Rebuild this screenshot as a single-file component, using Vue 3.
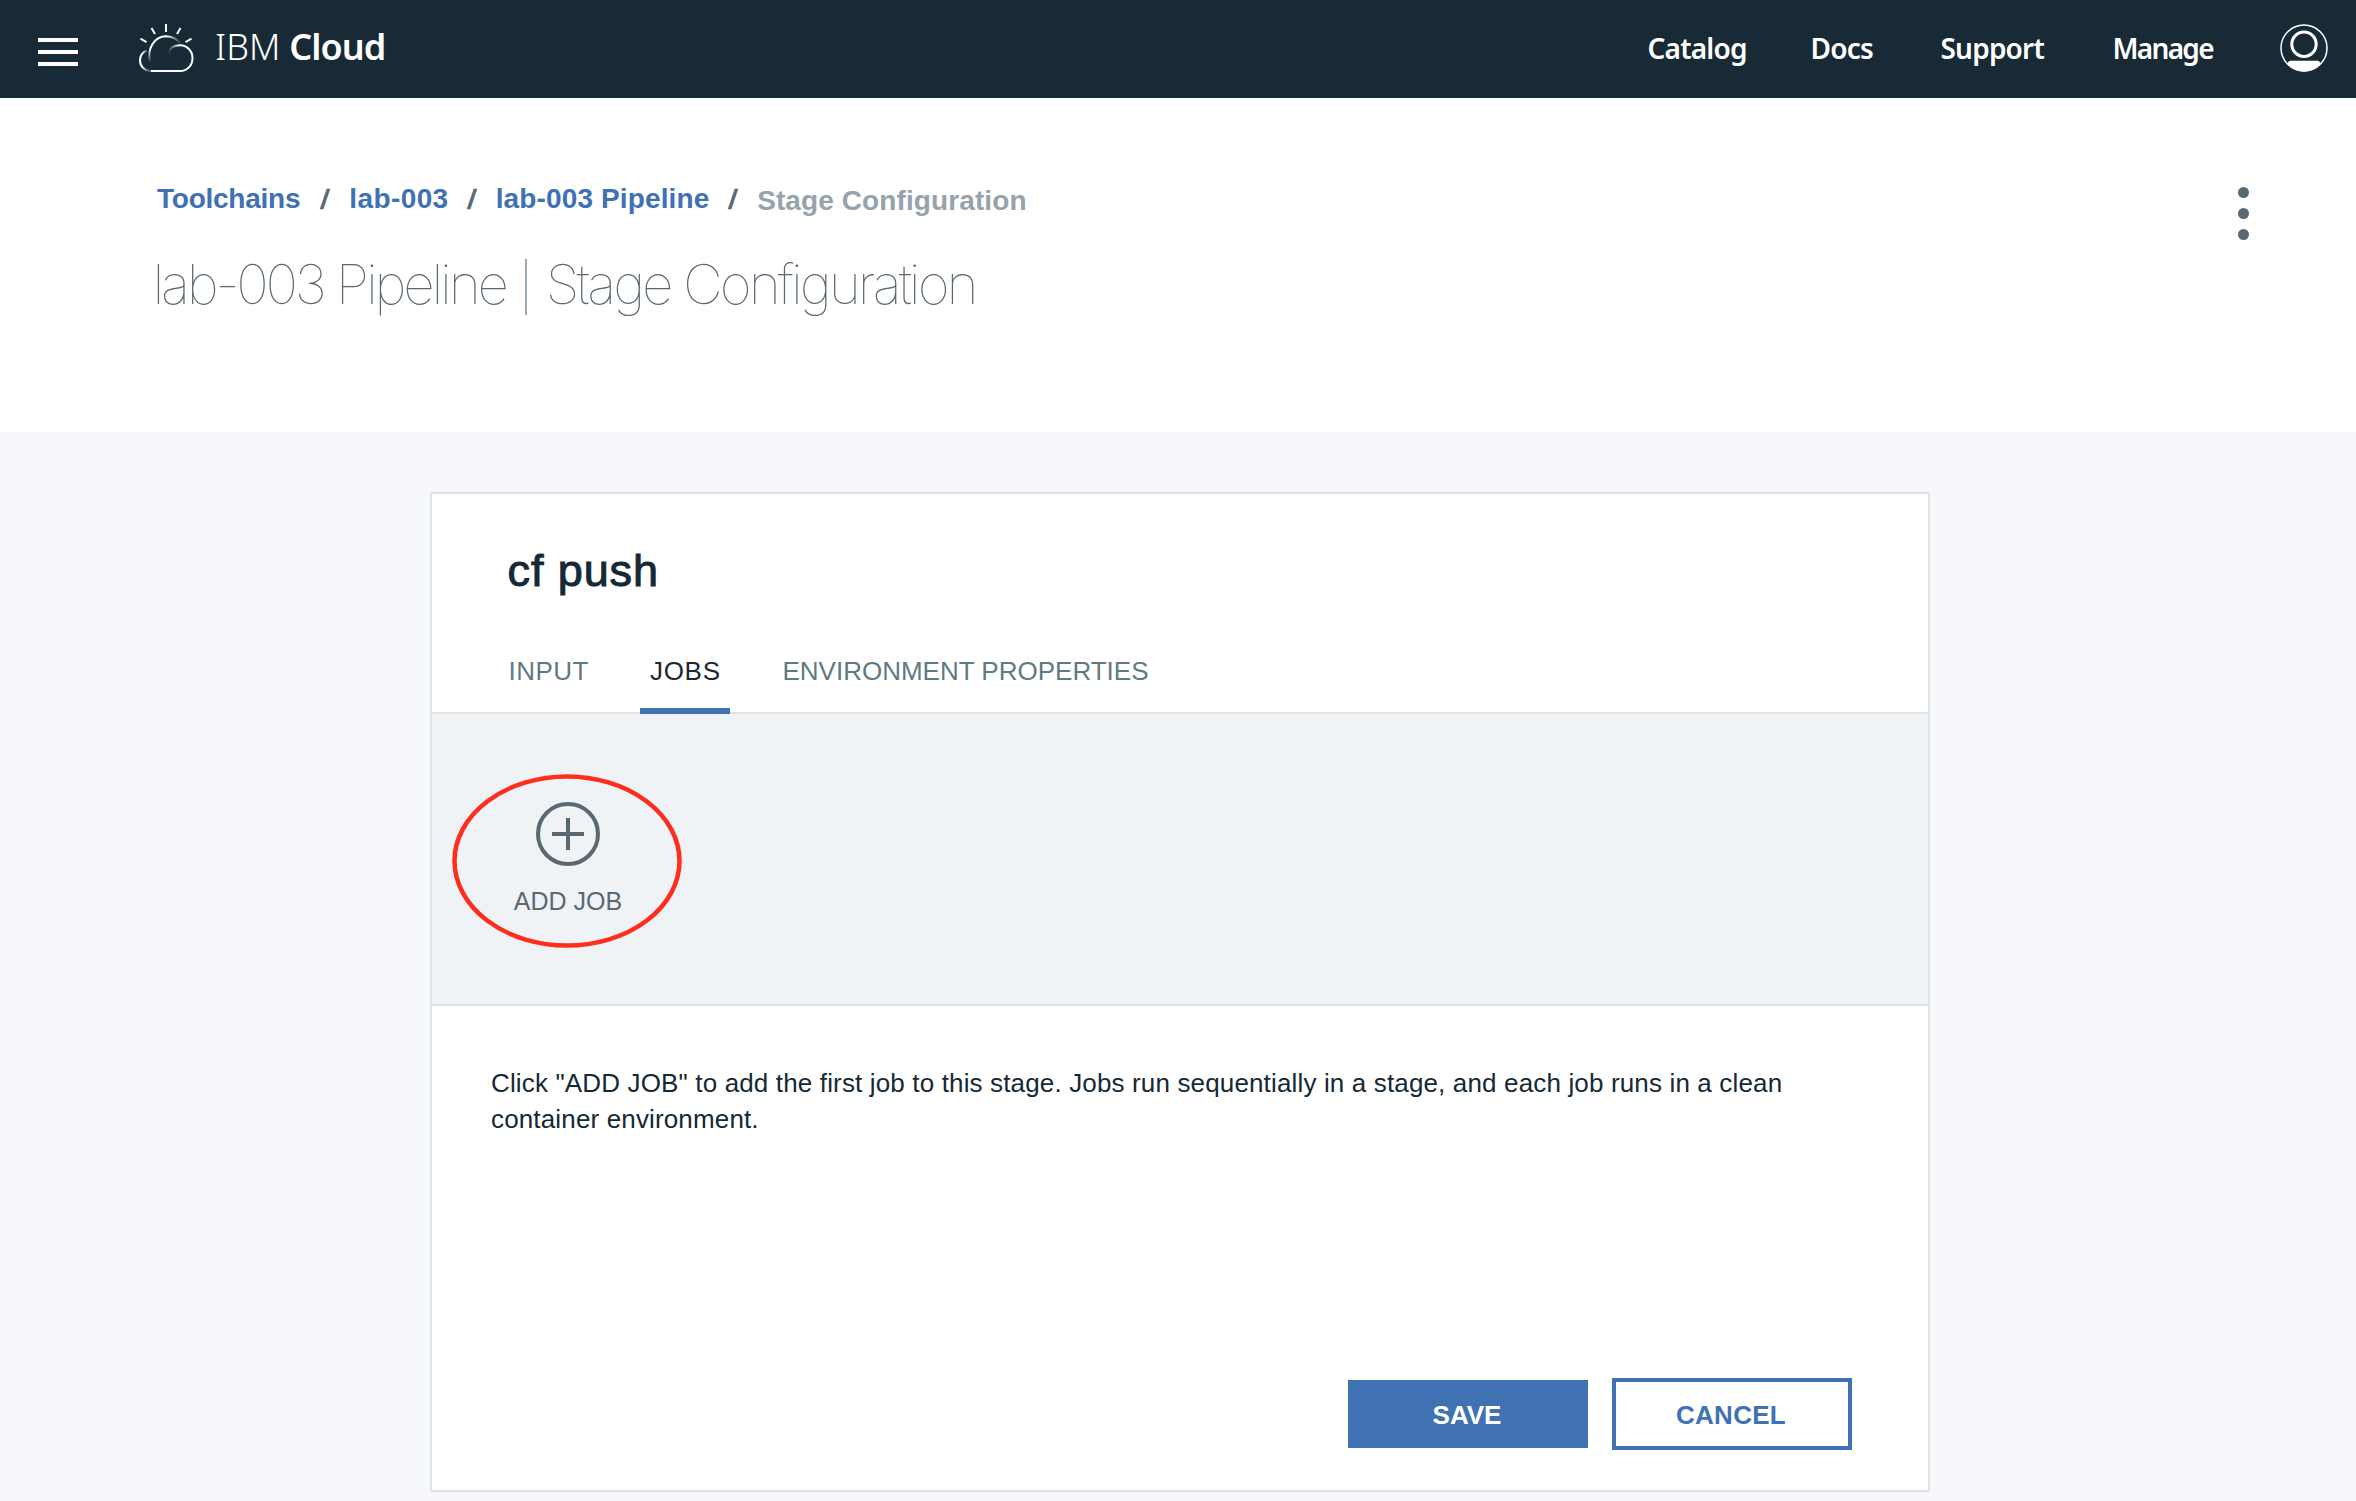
<script setup>
const nav = ['Catalog', 'Docs', 'Support', 'Manage']
const tabs = [
  { label: 'INPUT', cls: 'tab-input' },
  { label: 'JOBS', cls: 'tab-jobs' },
  { label: 'ENVIRONMENT PROPERTIES', cls: 'tab-env' },
]
</script>

<template>
  <div class="page">
    <header class="topbar">
      <div class="burger"><i></i><i></i><i></i></div>
      <svg class="cloud" width="60" height="54" viewBox="0 0 60 54" fill="none" stroke="#fff" stroke-width="2">
        <defs>
          <linearGradient id="fadeLeft" gradientUnits="userSpaceOnUse" x1="0" y1="28" x2="0" y2="42">
            <stop offset="0" stop-color="#fff" /><stop offset="1" stop-color="#fff" stop-opacity="0" />
          </linearGradient>
          <linearGradient id="fadeTop" gradientUnits="userSpaceOnUse" x1="30" y1="0" x2="44" y2="0">
            <stop offset="0" stop-color="#fff" /><stop offset="1" stop-color="#fff" stop-opacity="0" />
          </linearGradient>
          <linearGradient id="fadeInner" gradientUnits="userSpaceOnUse" x1="31" y1="0" x2="42" y2="0">
            <stop offset="0" stop-color="#fff" stop-opacity="0" /><stop offset="1" stop-color="#fff" />
          </linearGradient>
          <linearGradient id="fadeTail" gradientUnits="userSpaceOnUse" x1="5" y1="0" x2="10.500" y2="0">
            <stop offset="0" stop-color="#fff" /><stop offset="1" stop-color="#fff" stop-opacity="0.300" />
          </linearGradient>
        </defs>
        <path d="M14.200 50C8 50 3 45.500 3 39.500C3 35 5.500 31.500 9.500 29.700" stroke="url(#fadeTail)" />
        <path d="M14 50H43C50 50 55.500 44.500 55.500 37.200C55.500 30 50 24.300 43 24.300" />
        <path d="M43 24.300C37 24.300 32.500 27.500 31 32.500" stroke="url(#fadeInner)" />
        <path d="M13 41C10 28 17 15.200 29 15.200" stroke="url(#fadeLeft)" />
        <path d="M28.500 15.200C35 15.200 40.500 18 43.500 22.500" stroke="url(#fadeTop)" />
        <path d="M29 3V11M14.500 7L18 13M43.500 7L40 13M3.500 17.700L9.500 21.200M54.500 17.700L48.500 21.200" />
      </svg>
      <div class="brand"><span>IBM</span><span class="bold">Cloud</span></div>
      <nav class="nav">
        <a v-for="n in nav" :key="n" :class="'nav-' + n.toLowerCase()">{{ n }}</a>
      </nav>
      <svg class="avatar" width="48" height="48" viewBox="0 0 48 48" fill="none" stroke="#fff">
        <circle cx="24" cy="24" r="23" stroke-width="1.500" />
        <circle cx="24" cy="20.200" r="12.200" stroke-width="3" />
        <path d="M8 40.500C7.500 37.500 9 36.700 11 36.700H37C39 36.700 40.500 37.500 40 40.500C36 45 30 47.500 24 47.500S12 45 8 40.500Z" fill="#fff" stroke="none" />
      </svg>
    </header>

    <section class="heading">
      <div>
        <div class="crumbs">
          <a class="c1">Toolchains</a><i class="s1"><b>/</b></i><a class="c2">lab-003</a><i class="s2"><b>/</b></i><a class="c3">lab-003 Pipeline</a><i class="s3"><b>/</b></i><span class="c4">Stage Configuration</span>
        </div>
        <h1><span class="t1">lab-003 Pipeline</span><span class="bar">|</span><span>Stage Configuration</span></h1>
      </div>
      <div class="kebab"><i></i><i></i><i></i></div>
    </section>

    <main class="card">
      <h2>cf push</h2>
      <div class="tabs">
        <div v-for="t in tabs" :key="t.label" class="tab" :class="t.cls">{{ t.label }}</div>
      </div>
      <div class="jobs">
        <button class="add">
          <svg width="64" height="64" viewBox="0 0 64 64" fill="none" stroke="#5a6872" stroke-width="4">
            <circle cx="32" cy="32" r="30" />
            <path d="M32 16V48M16 32H48" />
          </svg>
          <span>ADD JOB</span>
        </button>
        <svg class="mark" width="232" height="176" viewBox="0 0 232 176" fill="none">
          <ellipse cx="116" cy="88" rx="112.500" ry="84.500" stroke="#ff2d1c" stroke-width="4.500" />
        </svg>
      </div>
      <p class="hint">Click "ADD JOB" to add the first job to this stage. Jobs run sequentially in a stage, and each job runs in a clean<br />container environment.</p>
      <div class="actions">
        <button class="save">SAVE</button>
        <button class="cancel">CANCEL</button>
      </div>
    </main>
  </div>
</template>

<style>
body { background: #f5f7fb; }
</style>

<style scoped>
* { box-sizing: border-box; }
.page { height: 1501px; overflow: hidden; background: #f5f7fb; font-family: "Liberation Sans", Arial, sans-serif; color: #152935; }
.topbar { height: 98px; background: #182a35; display: flex; align-items: flex-start; padding: 0 28px 0 38px; }
.burger { width: 40px; margin-top: 38px; display: flex; flex-direction: column; gap: 8px; }
.burger i { height: 4px; background: #fff; }
.cloud { margin: 21px 0 0 59px; }
.brand { margin: 22px 0 0 18px; display: flex; color: #fff; font: 300 36px/50px "Noto Sans", sans-serif; }
.bold { font-weight: 600; margin-left: 9px; letter-spacing: -1px; }
.nav { margin-left: auto; display: flex; margin-top: 28px; color: #fff; font: 600 28px/40px "Noto Sans", sans-serif; white-space: nowrap; }
.nav-catalog { width: 163px; letter-spacing: -0.8px; }
.nav-docs { width: 130px; letter-spacing: -0.8px; }
.nav-support { width: 172px; letter-spacing: -0.8px; }
.nav-manage { width: 167.500px; letter-spacing: -1.7px; }
.avatar { margin-top: 24px; }
.heading { height: 334px; background: #fff; display: flex; justify-content: space-between; padding: 83px 107px 0 157px; }
.crumbs { display: flex; font-size: 28px; font-weight: 700; line-height: 36px; color: #4071b3; white-space: nowrap; }
.crumbs i { font-style: normal; color: #5a6872; text-align: center; padding-top: 1px; }
.crumbs b { display: inline-block; font-weight: 400; -webkit-text-stroke: 0.7px #5a6872; transform: scaleX(1.2); }
.c1 { width: 143.700px; letter-spacing: -0.25px; }
.c2 { width: 99.300px; letter-spacing: 0.4px; }
.c3 { width: 213.700px; letter-spacing: 0.13px; }
.c4 { color: #95a3ac; padding-top: 2px; letter-spacing: 0.1px; }
.s1 { width: 48.600px; }
.s2 { width: 47.100px; }
.s3 { width: 47.800px; }
h1 { margin: 30px 0 0 -4.500px; display: flex; align-items: baseline; font: 100 55px/70px Inter, sans-serif; letter-spacing: -3px; color: #5a6872; white-space: nowrap; }
.t1 { letter-spacing: -3.25px; }
.bar { width: 40px; text-align: center; font-size: 47px; letter-spacing: 0; }
.kebab { padding-top: 6px; display: flex; flex-direction: column; gap: 9.750px; }
.kebab i { width: 11px; height: 11px; border-radius: 50%; background: #5a6872; }
.card { margin: 60px auto 0 430px; width: 1500px; height: 1000px; background: #fff; border: 2px solid #dfe3e6; display: flex; flex-direction: column; }
h2 { margin: 0; padding: 52px 0 0 75.500px; height: 131px; font-size: 45px; font-weight: 400; line-height: 50px; letter-spacing: 0.9px; -webkit-text-stroke: 1px #152935; }
.tabs { height: 89px; display: flex; border-bottom: 2px solid #dfe3e6; padding-left: 60px; font-size: 26px; line-height: 30px; color: #5f7a80; white-space: nowrap; }
.tab { height: 89px; padding-top: 31px; }
.tab-input { width: 148px; padding-left: 16.500px; letter-spacing: 0.5px; }
.tab-jobs { width: 90px; padding-left: 10px; letter-spacing: 0.7px; color: #1d2830; border-bottom: 6px solid #4071b3; }
.tab-env { padding-left: 52.500px; }
.jobs { position: relative; height: 292px; background: #eff3f6; border-bottom: 2px solid #dfe3e6; padding: 88px 0 0 66px; }
.add { width: 140px; padding: 0; border: 0; background: none; display: flex; flex-direction: column; align-items: center; font: 25px/30px "Liberation Sans", Arial, sans-serif; color: #5a6872; gap: 20px; }
.mark { position: absolute; left: 19.300px; top: 58.500px; }
.hint { margin: 0; padding: 59px 0 0 59px; font-size: 26px; line-height: 36px; letter-spacing: 0.148px; white-space: nowrap; }
.actions { margin-top: auto; display: flex; justify-content: flex-end; align-items: center; gap: 24px; padding: 0 76px 40px 0; }
.actions button { width: 240px; font: 700 26px/30px "Liberation Sans", Arial, sans-serif; padding: 2px 2px 0 0; }
.save { height: 68px; border: 0; background: #4071b3; color: #fff; }
.cancel { height: 72px; border: 4px solid #4071b3; background: #fff; color: #4071b3; letter-spacing: 0.3px; }
</style>
